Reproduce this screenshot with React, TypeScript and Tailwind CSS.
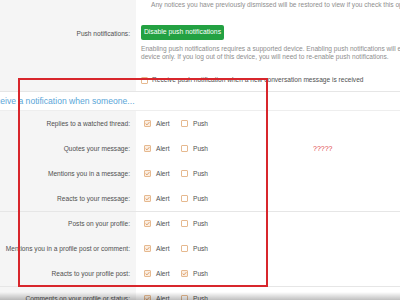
import React from 'react';

type Pref = { label: string; alert: boolean; push: boolean; divider?: boolean };

const prefs: Pref[] = [
  { label: 'Replies to a watched thread:', alert: true, push: false },
  { label: 'Quotes your message:', alert: true, push: false },
  { label: 'Mentions you in a message:', alert: true, push: false },
  { label: 'Reacts to your message:', alert: true, push: false },
  { label: 'Posts on your profile:', alert: true, push: false, divider: true },
  { label: 'Mentions you in a profile post or comment:', alert: true, push: false },
  { label: 'Reacts to your profile post:', alert: true, push: true },
  { label: 'Comments on your profile or status:', alert: true, push: false, divider: true },
];

const Box: React.FC<{ checked: boolean }> = ({ checked }) => (
  <span
    className={`inline-flex h-[7px] w-[7px] shrink-0 items-center justify-center rounded-[1px] border border-[#e6b98f] ${
      checked ? 'bg-[#fbeee2]' : 'bg-white'
    }`}
  >
    {checked && (
      <svg viewBox="0 0 8 8" className="h-[5px] w-[5px]">
        <path d="M1 4.2 L3.2 6.2 L7 1.8" fill="none" stroke="#d88f52" strokeWidth="1.3" />
      </svg>
    )}
  </span>
);

const App: React.FC = () => {
  return (
    <div className="relative h-[300px] w-[400px] overflow-hidden bg-white font-['Liberation_Sans',Arial,sans-serif] text-[6.6px] text-[#505050]">
      {/* notice + push rows */}
      <div className="flex h-[18px]">
        <div className="w-[136px] shrink-0 bg-[#f5f5f5]" />
        <div className="whitespace-nowrap pl-[15px] pt-[1px] leading-[8px] text-[#8e8e8e]">
          Any notices you have previously dismissed will be restored to view if you check this option.
        </div>
      </div>
      <div className="flex h-[74px] border-b border-[#e6e6e6]">
        <div className="w-[136px] shrink-0 bg-[#f5f5f5] pr-[6px] pt-[12px] text-right leading-[8px]">
          Push notifications:
        </div>
        <div className="flex flex-col whitespace-nowrap pl-[5px] pt-[7px]">
          <button className="h-[15px] w-[83px] rounded-[2px] bg-[#23a142] text-[6.8px] text-white">
            Disable push notifications
          </button>
          <p className="mt-[5px] leading-[8px] text-[#8e8e8e]">
            Enabling push notifications requires a supported device. Enabling push notifications will enable
            <br />
            device only. If you log out of this device, you will need to re-enable push notifications.
          </p>
          <label className="mt-[15px] flex items-center gap-[4px] leading-[8px]">
            <Box checked={false} />
            Receive push notification when a new conversation message is received
          </label>
        </div>
      </div>

      {/* heading */}
      <div className="flex h-[19px] items-center border-b border-[#eeeeee]">
        <h3 className="ml-[-15px] whitespace-nowrap text-[8.6px] text-[#5aa6d8]">
          Receive a notification when someone...
        </h3>
      </div>

      {prefs.map((p) => (
        <div key={p.label} className={`flex h-[25px] ${p.divider ? 'border-t border-[#e6e6e6]' : ''}`}>
          <div className="flex w-[136px] shrink-0 items-center justify-end whitespace-nowrap bg-[#f5f5f5] pr-[6px]">
            {p.label}
          </div>
          <div className="flex items-center pl-[8px]">
            <label className="flex w-[37px] items-center gap-[5px]">
              <Box checked={p.alert} />
              Alert
            </label>
            <label className="flex items-center gap-[5px]">
              <Box checked={p.push} />
              Push
            </label>
          </div>
        </div>
      ))}

      {/* annotation overlay */}
      <div className="pointer-events-none absolute left-[18px] top-[78px] h-[209px] w-[250px] border-2 border-[#d8262c]" />
      <span className="absolute left-[313px] top-[144px] text-[7px] text-[#e0403f]">?????</span>
      <div className="pointer-events-none absolute bottom-0 left-0 h-[8px] w-full bg-gradient-to-b from-transparent to-black/25" />
    </div>
  );
};

export default App;
